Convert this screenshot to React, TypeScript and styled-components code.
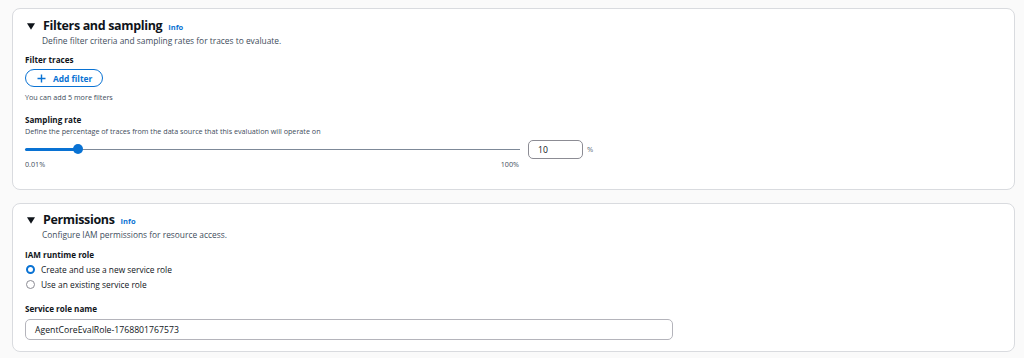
import styled, { createGlobalStyle } from "styled-components";

const GlobalStyle = createGlobalStyle`
  html, body {
    margin: 0;
    background: #fafafa;
  }
  body {
    padding: 8px 9px 0 12px;
    font-family: "Open Sans", "Noto Sans", sans-serif;
    color: #0f141a;
  }
`;

const Page = styled.div`
  display: flex;
  flex-direction: column;
  gap: 13px;
`;

const Card = styled.section<{ $top: number; $bottom: number }>`
  background: #ffffff;
  border: 1px solid #d9dbdf;
  border-radius: 8px;
  padding: ${(p) => p.$top}px 12px ${(p) => p.$bottom}px 12px;
`;

const Header = styled.div`
  display: flex;
  align-items: center;
  height: 18px;
`;

const Caret = styled.svg`
  width: 8px;
  height: 7px;
  margin: 1px 8px 0 2px;
`;

const Title = styled.h2`
  margin: 0;
  font-size: 12.5px;
  font-weight: 700;
  line-height: 18px;
  letter-spacing: -0.35px;
`;

const InfoLink = styled.a`
  margin-left: 6px;
  margin-top: 2px;
  font-size: 7.5px;
  font-weight: 700;
  color: #0972d3;
`;

const Description = styled.p<{ $indent?: boolean }>`
  margin: 0;
  padding-left: ${(p) => (p.$indent ? "17px" : "0")};
  font-size: 8.4px;
  line-height: 12px;
  color: #414d5c;
`;

const Label = styled.div<{ $top: number }>`
  margin-top: ${(p) => p.$top}px;
  font-size: 8.1px;
  font-weight: 700;
  line-height: 12px;
`;

const SmallText = styled.div<{ $top?: number }>`
  margin-top: ${(p) => p.$top ?? 0}px;
  font-size: 7.2px;
  line-height: 10px;
  color: #414d5c;
`;

const AddButton = styled.button`
  display: flex;
  align-items: center;
  gap: 7px;
  margin-top: 3px;
  height: 18px;
  width: 78px;
  padding: 0 0 0 11px;
  border: 1px solid #0972d3;
  border-radius: 10px;
  background: #ffffff;
  color: #0972d3;
  font-family: inherit;
  font-size: 8.4px;
  font-weight: 700;
`;

const SliderRow = styled.div`
  display: flex;
  align-items: flex-start;
  gap: 8px;
  margin-top: 4px;
`;

const SliderColumn = styled.div`
  width: 495px;
`;

const Track = styled.div`
  position: relative;
  height: 19px;
  display: flex;
  align-items: center;
`;

const TrackLine = styled.div`
  width: 100%;
  height: 1px;
  background: #7d8998;
`;

const TrackFill = styled.div`
  position: absolute;
  left: 0;
  top: 8px;
  height: 3px;
  border-radius: 2px;
  background: #0972d3;
`;

const Thumb = styled.div`
  position: absolute;
  top: 4px;
  width: 10px;
  height: 10px;
  margin-left: -5px;
  border-radius: 50%;
  background: #0972d3;
`;

const RangeLabels = styled.div`
  display: flex;
  justify-content: space-between;
  padding-right: 1px;
`;

const NumberBox = styled.div`
  display: flex;
  align-items: center;
  box-sizing: border-box;
  width: 55px;
  height: 19px;
  padding-left: 9px;
  border: 1px solid #8c8c94;
  border-radius: 5px;
  font-size: 8.6px;
`;

const Unit = styled.span`
  margin-top: 4px;
  margin-left: -4px;
  font-size: 7.5px;
  color: #5f6b7a;
`;

const RadioGroup = styled.div`
  display: flex;
  flex-direction: column;
  gap: 1px;
  margin-top: 1px;
`;

const RadioRow = styled.label`
  display: flex;
  align-items: center;
  gap: 6px;
  height: 14px;
  font-size: 8.4px;
  padding-left: 1px;
`;

const RadioDot = styled.span<{ $checked?: boolean }>`
  box-sizing: border-box;
  width: 9px;
  height: 9px;
  border-radius: 50%;
  border: ${(p) => (p.$checked ? "2.5px solid #0972d3" : "1px solid #8c8c94")};
  background: #ffffff;
`;

const TextBox = styled.div`
  display: flex;
  align-items: center;
  box-sizing: border-box;
  margin-top: 4px;
  width: 648px;
  height: 21px;
  padding-left: 9px;
  border: 1px solid #b4b4bb;
  border-radius: 5px;
  font-size: 8.7px;
`;

const Triangle = () => (
  <Caret viewBox="0 0 8 7">
    <path d="M0 0.3 H8 L4 6.7 Z" fill="#0f141a" />
  </Caret>
);

const PlusIcon = () => (
  <svg width="9" height="9" viewBox="0 0 9 9">
    <path d="M4.5 0.5 V8.5 M0.5 4.5 H8.5" stroke="#0972d3" strokeWidth="1.4" />
  </svg>
);

export default function App() {
  const sampleAt = 10.7;
  return (
    <>
      <GlobalStyle />
      <Page>
        <Card $top={8} $bottom={20}>
          <Header>
            <Triangle />
            <Title>Filters and sampling</Title>
            <InfoLink>Info</InfoLink>
          </Header>
          <Description $indent>
            Define filter criteria and sampling rates for traces to evaluate.
          </Description>
          <Label $top={7}>Filter traces</Label>
          <AddButton>
            <PlusIcon />
            Add filter
          </AddButton>
          <SmallText $top={5}>You can add 5 more filters</SmallText>
          <Label $top={12}>Sampling rate</Label>
          <SmallText>
            Define the percentage of traces from the data source that this evaluation will operate on
          </SmallText>
          <SliderRow>
            <SliderColumn>
              <Track>
                <TrackLine />
                <TrackFill style={{ width: `${sampleAt}%` }} />
                <Thumb style={{ left: `${sampleAt}%` }} />
              </Track>
              <RangeLabels>
                <SmallText>0.01%</SmallText>
                <SmallText>100%</SmallText>
              </RangeLabels>
            </SliderColumn>
            <NumberBox>10</NumberBox>
            <Unit>%</Unit>
          </SliderRow>
        </Card>
        <Card $top={7} $bottom={11}>
          <Header>
            <Triangle />
            <Title>Permissions</Title>
            <InfoLink>Info</InfoLink>
          </Header>
          <Description $indent>Configure IAM permissions for resource access.</Description>
          <Label $top={8}>IAM runtime role</Label>
          <RadioGroup>
            <RadioRow>
              <RadioDot $checked />
              Create and use a new service role
            </RadioRow>
            <RadioRow>
              <RadioDot />
              Use an existing service role
            </RadioRow>
          </RadioGroup>
          <Label $top={12}>Service role name</Label>
          <TextBox>AgentCoreEvalRole-1768801767573</TextBox>
        </Card>
      </Page>
    </>
  );
}
